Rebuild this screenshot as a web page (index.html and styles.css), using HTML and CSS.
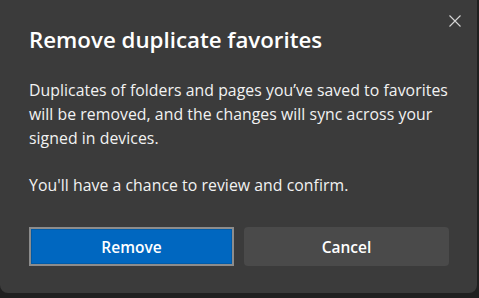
FILE: index.html
```html
<!DOCTYPE html>
<html lang="en">
  <head>
    <meta charset="UTF-8" />
    <title>Remove duplicate favorites</title>
    <link rel="stylesheet" href="styles.css">
  </head>
  <body>
    <section class="dialog">
      <button class="close" aria-label="Close">
        <svg width="12" height="12" viewBox="0 0 12 12">
          <path d="M0.5 0.5 L11.5 11.5 M11.5 0.5 L0.5 11.5" stroke="#d6d6d6" stroke-width="1.1" fill="none" />
        </svg>
      </button>
      <h2 class="title">Remove duplicate favorites</h2>
      <p class="text">Duplicates of folders and pages you’ve saved to favorites will be removed, and the changes will sync across your signed in devices.</p>
      <p class="text">You'll have a chance to review and confirm.</p>
      <div class="actions">
        <button class="btn primary">Remove</button>
        <button class="btn secondary">Cancel</button>
      </div>
    </section>
  </body>
</html>
```

FILE: styles.css
```css
* {
  margin: 0;
  padding: 0;
  box-sizing: border-box;
}
body {
  height: 100vh;
  background-color: #202020;
  font-family: "Open Sans", "Noto Sans", sans-serif;
  color: #ffffff;
}
.dialog {
  position: relative;
  width: 477px;
  height: 293px;
  background-color: #3b3b3b;
  border-radius: 0 0 8px 8px;
  padding: 25px 28px 0 29px;
}
.close {
  position: absolute;
  top: 15px;
  right: 16px;
  width: 12px;
  height: 12px;
  background: none;
  border: 0;
  display: flex;
}
.title {
  font-size: 22.3px;
  font-weight: 600;
  line-height: 30px;
}
.text {
  margin-top: 23px;
  font-size: 15.8px;
  line-height: 24px;
  color: #f2f2f2;
  letter-spacing: 0.05px;
}
.text + .text {
  margin-top: 23px;
}
.actions {
  display: flex;
  gap: 10px;
  margin-top: 30px;
}
.btn {
  width: 206px;
  height: 39px;
  font-family: inherit;
  font-size: 15.5px;
  font-weight: 600;
  color: #ffffff;
  border-radius: 4px;
}
.primary {
  background-color: #0067c0;
  border: 2px solid #00467f;
  outline: 2px solid #8c8c8c;
  outline-offset: -2px;
  border-radius: 0;
  box-shadow: inset 0 0 0 1px #005ba8;
}
.secondary {
  background-color: #4a4a4a;
  border: 0;
}
```
